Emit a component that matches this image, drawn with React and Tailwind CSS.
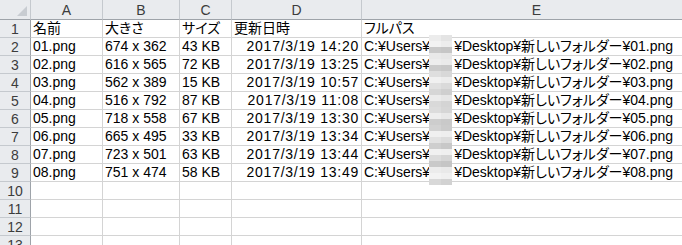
import React from "react";

const cols = ["A", "B", "C", "D", "E"];
const widths = ["w-[72px]", "w-[77px]", "w-[52px]", "w-[130px]", "w-[350px]"];

const files = [
  ["01.png", "674 x 362", "43 KB", "2017/3/19 14:20"],
  ["02.png", "616 x 565", "72 KB", "2017/3/19 13:25"],
  ["03.png", "562 x 389", "15 KB", "2017/3/19 10:57"],
  ["04.png", "516 x 792", "87 KB", "2017/3/19 11:08"],
  ["05.png", "718 x 558", "67 KB", "2017/3/19 13:30"],
  ["06.png", "665 x 495", "33 KB", "2017/3/19 13:34"],
  ["07.png", "723 x 501", "63 KB", "2017/3/19 13:44"],
  ["08.png", "751 x 474", "58 KB", "2017/3/19 13:49"],
];

// blurred user name, two columns of blocks, 6px tall each
const mosaic = [
  ["#ececec", "#e4e4e4"],
  ["#f2f2f2", "#ededed"],
  ["#c9c9c9", "#c6c6c6"],
  ["#e9e9e9", "#e6e6e6"],
  ["#ededed", "#eaeaea"],
  ["#cbcbcb", "#c8c8c8"],
  ["#dedede", "#d8d8d8"],
  ["#f0f0f0", "#ececec"],
  ["#e0e0e0", "#dadada"],
  ["#d6d6d6", "#cfcfcf"],
  ["#ebebeb", "#e6e6e6"],
  ["#d9d9d9", "#d4d4d4"],
  ["#dcdcdc", "#d6d6d6"],
  ["#eeeeee", "#e8e8e8"],
  ["#cdcdcd", "#c9c9c9"],
  ["#d2d2d2", "#cbcbcb"],
  ["#f0f0f0", "#eeeeee"],
  ["#e2e2e2", "#dcdcdc"],
  ["#cecece", "#c8c8c8"],
  ["#f1f1f1", "#efefef"],
  ["#dcdcdc", "#d5d5d5"],
  ["#c9c9c9", "#c5c5c5"],
  ["#ececec", "#e9e9e9"],
  ["#f3f3f3", "#f0f0f0"],
  ["#d8d8d8", "#d2d2d2"],
];

function Cell({ w, right, wide, children }) {
  return (
    <div
      className={`${w} h-[18px] shrink-0 border-r border-b border-[#d4d4d4] flex items-end pb-[1px] px-[2px] whitespace-nowrap ${
        right ? "justify-end" : ""
      } ${wide ? "tracking-[0.75px]" : ""}`}
    >
      {children}
    </div>
  );
}

function RowHead({ n }) {
  return (
    <div className="w-[31px] h-[18px] shrink-0 bg-[#e9ebee] border-r border-r-[#9ea3a9] border-b border-b-[#c5c9ce] flex items-center justify-center text-[#3c3c3c]">
      {n}
    </div>
  );
}

export default function App() {
  const rows = [["名前", "大きさ", "サイズ", "更新日時", "フルパス"], ...files];

  return (
    <div className="relative w-[682px] h-[245px] overflow-hidden bg-white text-[14px] leading-[16px] text-black font-['Liberation_Sans','Noto_Sans_CJK_JP',sans-serif] [font-feature-settings:'palt']">
      {/* column header */}
      <div className="flex h-[20px]">
        <div className="w-[31px] shrink-0 bg-[#e9ebee] border-r border-r-[#c5c9ce] border-b border-b-[#9ea3a9] flex items-end justify-end p-[3px]">
          <div className="w-0 h-0 border-l-[10px] border-l-transparent border-b-[10px] border-b-[#c8ccd1]" />
        </div>
        {cols.map((c, i) => (
          <div
            key={c}
            className={`${widths[i]} shrink-0 bg-[#e9ebee] border-r border-r-[#c5c9ce] border-b border-b-[#9ea3a9] flex items-center justify-center text-[#3c3c3c]`}
          >
            {c}
          </div>
        ))}
      </div>

      {Array.from({ length: 13 }).map((_, r) => {
        const data = rows[r];
        return (
          <div key={r} className="flex">
            <RowHead n={r + 1} />
            {r === 0 && (
              <>
                <Cell w={widths[0]}>{data[0]}</Cell>
                <Cell w={widths[1]}>{data[1]}</Cell>
                <Cell w={widths[2]}>{data[2]}</Cell>
                <Cell w={widths[3]}>{data[3]}</Cell>
                <Cell w={widths[4]}>{data[4]}</Cell>
              </>
            )}
            {r > 0 && data && (
              <>
                <Cell w={widths[0]}>{data[0]}</Cell>
                <Cell w={widths[1]}>{data[1]}</Cell>
                <Cell w={widths[2]}>{data[2]}</Cell>
                <Cell w={widths[3]} right wide>
                  {data[3]}
                </Cell>
                <Cell w={widths[4]}>
                  C:¥Users¥<span className="inline-block w-[24px]" />¥Desktop¥新しいフォルダー¥{data[0]}
                </Cell>
              </>
            )}
            {!data && widths.map((w) => <Cell key={w} w={w} />)}
          </div>
        );
      })}

      {/* blurred user name */}
      <div className="absolute left-[429px] top-[35px] w-[23px] flex flex-col">
        {mosaic.map((m, i) => (
          <div key={i} className="flex h-[6px]">
            <div className="w-[12px]" style={{ background: m[0] }} />
            <div className="w-[11px]" style={{ background: m[1] }} />
          </div>
        ))}
      </div>
    </div>
  );
}
